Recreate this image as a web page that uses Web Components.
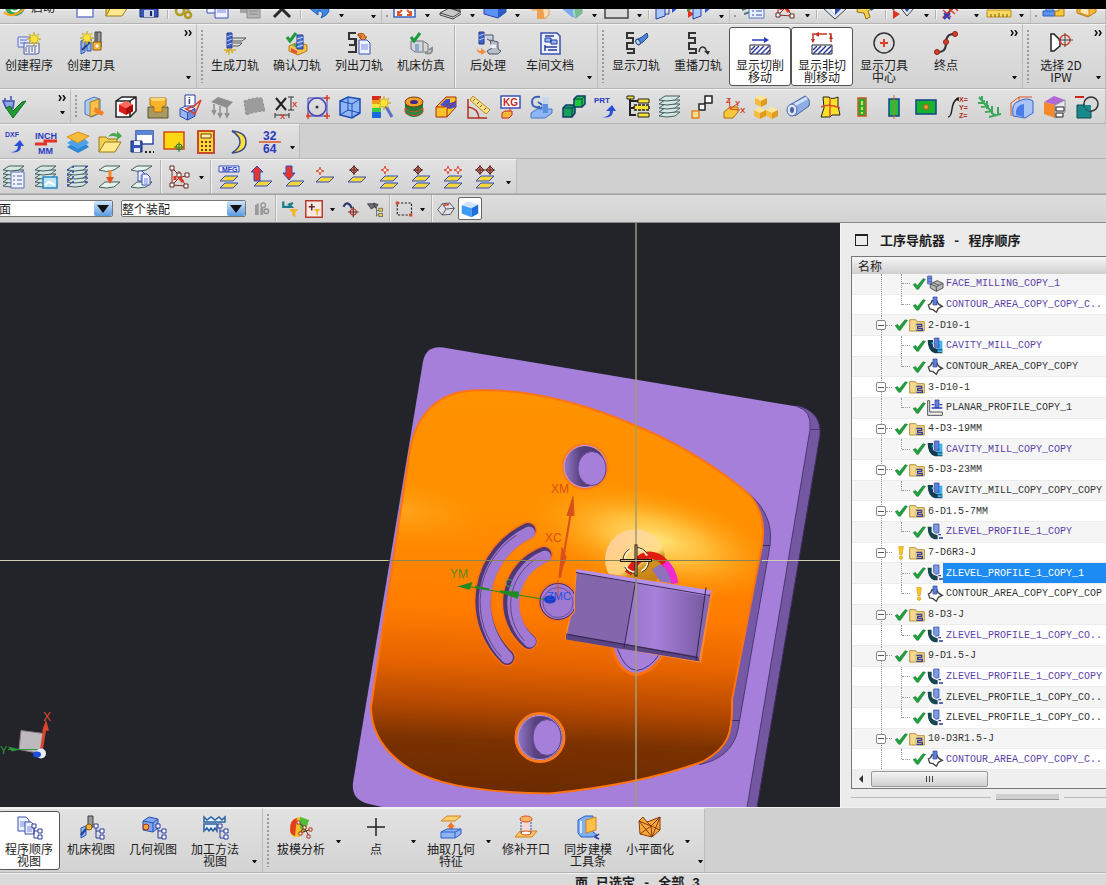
<!DOCTYPE html>
<html lang="zh-CN">
<head>
<meta charset="utf-8">
<meta name="viewport" content="width=device-width, initial-scale=1">
<title>工序导航器</title>
<style>
    :root {
        --bar-top: #e2e2e2;
        --bar-bottom: #d3d3d3;
        --edge-dark: #b4b4b4;
        --edge-light: #f4f4f4;
        --ink: #1c1c1c;
    }
    body {
        margin: 0;
        color: var(--ink);
        font-family: "Noto Sans CJK SC", sans-serif;
        font-size: 12px;
        background: #d4d4d4;
    }
</style>
</head>
<body>
<cam-window>
    <tool-row slot="bars" kind="clipped">
        <tool-group size="382">
            <start-menu>启动</start-menu>
            <tool-icon name="new"></tool-icon>
            <tool-icon name="open"></tool-icon>
            <tool-icon name="save"></tool-icon>
            <tool-sep></tool-sep>
            <tool-icon name="cut"></tool-icon>
            <tool-icon name="copy"></tool-icon>
            <tool-icon name="paste"></tool-icon>
            <tool-icon name="delete"></tool-icon>
            <tool-sep></tool-sep>
            <tool-icon name="undo"></tool-icon>
            <tool-caret></tool-caret>
            <tool-overflow></tool-overflow>
        </tool-group>
        <tool-group size="348" grip>
            <tool-icon name="fit"></tool-icon>
            <tool-caret></tool-caret>
            <tool-icon name="laptop"></tool-icon>
            <tool-caret></tool-caret>
            <tool-icon name="bluecube"></tool-icon>
            <tool-caret></tool-caret>
            <tool-icon name="sectionA"></tool-icon>
            <tool-icon name="sectionB"></tool-icon>
            <tool-caret></tool-caret>
            <tool-icon name="square"></tool-icon>
            <tool-caret></tool-caret>
            <tool-sep></tool-sep>
            <tool-icon name="door"></tool-icon>
            <tool-icon name="doorflag"></tool-icon>
            <tool-overflow></tool-overflow>
        </tool-group>
        <tool-group size="301" grip>
            <tool-icon name="listview"></tool-icon>
            <tool-icon name="graph"></tool-icon>
            <tool-caret></tool-caret>
            <tool-sep></tool-sep>
            <tool-icon name="diamond"></tool-icon>
            <tool-icon name="wrench"></tool-icon>
            <tool-sep></tool-sep>
            <tool-icon name="flags"></tool-icon>
            <tool-caret></tool-caret>
            <tool-sep></tool-sep>
            <tool-icon name="comb"></tool-icon>
            <tool-caret></tool-caret>
            <tool-icon name="ruler"></tool-icon>
            <tool-caret></tool-caret>
        </tool-group>
        <tool-group grip>
            <tool-icon name="clamp"></tool-icon>
            <tool-icon name="goldcube"></tool-icon>
        </tool-group>
    </tool-row>

    <tool-row slot="bars" kind="large">
        <tool-group size="197" shifted>
            <tool-button icon="program">创建程序</tool-button>
            <tool-button icon="tool">创建刀具</tool-button>
            <tool-overflow more></tool-overflow>
        </tool-group>
        <tool-group size="401" grip>
            <tool-button icon="generate">生成刀轨</tool-button>
            <tool-button icon="verify">确认刀轨</tool-button>
            <tool-button icon="listpath">列出刀轨</tool-button>
            <tool-button icon="simulate">机床仿真</tool-button>
            <tool-sep></tool-sep>
            <tool-button icon="post">后处理</tool-button>
            <tool-button icon="shopdoc">车间文档</tool-button>
            <tool-overflow></tool-overflow>
        </tool-group>
        <tool-group size="425" grip>
            <tool-button icon="showpath">显示刀轨</tool-button>
            <tool-button icon="replay">重播刀轨</tool-button>
            <tool-button icon="cutmove" pressed>显示切削移动</tool-button>
            <tool-button icon="noncut" pressed>显示非切削移动</tool-button>
            <tool-button icon="toolcenter">显示刀具中心</tool-button>
            <tool-button icon="endpoint">终点</tool-button>
            <tool-overflow more></tool-overflow>
        </tool-group>
        <tool-group grip>
            <tool-button icon="ipw">选择 2D IPW</tool-button>
            <tool-overflow more></tool-overflow>
        </tool-group>
    </tool-row>

    <tool-row slot="bars">
        <tool-group size="71" shifted>
            <tool-icon name="plugcheck"></tool-icon>
            <tool-overflow more></tool-overflow>
        </tool-group>
        <tool-group grip>
            <tool-icon name="extractbody"></tool-icon>
            <tool-icon name="redbox"></tool-icon>
            <tool-icon name="pocket"></tool-icon>
            <tool-icon name="infobox"></tool-icon>
            <tool-icon name="greyplate"></tool-icon>
            <tool-icon name="greysheet"></tool-icon>
            <tool-icon name="dimx"></tool-icon>
            <tool-icon name="circlebox"></tool-icon>
            <tool-icon name="glasscube"></tool-icon>
            <tool-icon name="rainbow"></tool-icon>
            <tool-icon name="ring"></tool-icon>
            <tool-icon name="step"></tool-icon>
            <tool-icon name="protractor"></tool-icon>
            <tool-icon name="kg"></tool-icon>
            <tool-icon name="revolve"></tool-icon>
            <tool-icon name="twocubes"></tool-icon>
            <tool-icon name="prt"></tool-icon>
            <tool-icon name="hierarchy"></tool-icon>
            <tool-icon name="stack"></tool-icon>
            <tool-icon name="links"></tool-icon>
            <tool-icon name="zyx"></tool-icon>
            <tool-icon name="goldcubes"></tool-icon>
            <tool-icon name="tube"></tool-icon>
            <tool-icon name="yellowsurf"></tool-icon>
            <tool-icon name="greenslot"></tool-icon>
            <tool-icon name="greentall"></tool-icon>
            <tool-icon name="greenwide"></tool-icon>
            <tool-icon name="xyz"></tool-icon>
            <tool-icon name="greencomb"></tool-icon>
            <tool-icon name="bluewrap"></tool-icon>
            <tool-icon name="colorbox"></tool-icon>
            <tool-icon name="tealshape"></tool-icon>
        </tool-group>
    </tool-row>

    <tool-row slot="bars">
        <tool-group size="300" shifted>
            <tool-icon name="dxf"></tool-icon>
            <tool-icon name="inch"></tool-icon>
            <tool-icon name="layers"></tool-icon>
            <tool-icon name="openarrow"></tool-icon>
            <tool-icon name="savewin"></tool-icon>
            <tool-icon name="yellowrect"></tool-icon>
            <tool-icon name="calc"></tool-icon>
            <tool-icon name="moon"></tool-icon>
            <tool-icon name="frac"></tool-icon>
            <tool-overflow></tool-overflow>
        </tool-group>
    </tool-row>

    <tool-row slot="bars">
        <tool-group size="517" shifted>
            <tool-icon name="stacklist"></tool-icon>
            <tool-icon name="stackpic"></tool-icon>
            <tool-icon name="stackdots"></tool-icon>
            <tool-icon name="stackmove"></tool-icon>
            <tool-icon name="stackcopy"></tool-icon>
            <tool-sep></tool-sep>
            <tool-icon name="graph"></tool-icon>
            <tool-caret></tool-caret>
            <tool-sep></tool-sep>
            <tool-icon name="mfg"></tool-icon>
            <tool-icon name="planeup"></tool-icon>
            <tool-icon name="planedown"></tool-icon>
            <tool-icon name="planestar"></tool-icon>
            <tool-icon name="planemark"></tool-icon>
            <tool-icon name="planesstar"></tool-icon>
            <tool-icon name="planesmark"></tool-icon>
            <tool-icon name="planesstars"></tool-icon>
            <tool-icon name="planesmarks"></tool-icon>
            <tool-overflow></tool-overflow>
        </tool-group>
    </tool-row>

    <selection-bar slot="bars"></selection-bar>

    <part-viewport slot="canvas"></part-viewport>
    <operation-navigator slot="side" heading="工序导航器 - 程序顺序" column="名称"></operation-navigator>

    <tool-row slot="footer" kind="large">
        <tool-group size="263" shifted>
            <tool-button icon="vprogram" pressed>程序顺序视图</tool-button>
            <tool-button icon="vmachine">机床视图</tool-button>
            <tool-button icon="vgeometry">几何视图</tool-button>
            <tool-button icon="vmethod">加工方法视图</tool-button>
            <tool-overflow></tool-overflow>
        </tool-group>
        <tool-group size="442" grip>
            <tool-button icon="draft">拔模分析</tool-button>
            <tool-caret></tool-caret>
            <tool-button icon="point">点</tool-button>
            <tool-caret></tool-caret>
            <tool-button icon="extract">抽取几何特征</tool-button>
            <tool-caret></tool-caret>
            <tool-button icon="patch">修补开口</tool-button>
            <tool-button icon="sync">同步建模工具条</tool-button>
            <tool-button icon="facet">小平面化</tool-button>
            <tool-caret></tool-caret>
            <tool-overflow></tool-overflow>
        </tool-group>
    </tool-row>
    <status-line slot="footer">面 已选定 - 全部 3</status-line>
</cam-window>

<script>
// ---------- icon pieces ----------
const plane = (x, y, fill = '#f2d63c', stroke = '#2f4fc0') =>
    `<path d="M${x} ${y + 5}l5-5h13l-5 5z" fill="${fill}" stroke="${stroke}"/>`;

const cube = (x, y, s, top, left, right, line = 'none') => {
    const h = s / 2, q = s / 4;
    return `<g stroke="${line}" stroke-linejoin="round">
        <path d="M${x} ${y + q}l${h}-${q} ${h} ${q}-${h} ${q}z" fill="${top}"/>
        <path d="M${x} ${y + q}l${h} ${q}v${h}l-${h}-${q}z" fill="${left}"/>
        <path d="M${x + s} ${y + q}l-${h} ${q}v${h}l${h}-${q}z" fill="${right}"/></g>`;
};

const sheets = (n = 5) => {
    let out = '';
    for (let i = n - 1; i >= 0; i--) {
        const y = 4 + i * 4;
        out += `<path d="M1 ${y + 1}l6-4h15l-5 4q-8 2-16 0z" fill="#d7e6e4" stroke="#41605f"/>`;
    }
    return out;
};

const label = (x, y, size, color, text, extra = '') =>
    `<text x="${x}" y="${y}" font-family="Liberation Sans, sans-serif" font-weight="700" font-size="${size}" fill="${color}" ${extra}>${text}</text>`;

const star = (x, y) => `<path d="M${x} ${y - 4}l1 3 3 1-3 1-1 3-1-3-3-1 3-1z" fill="#fff0e8" stroke="#e0503c"/>`;
const mark = (x, y) => `<path d="M${x} ${y - 4}l4 4-4 4-4-4z" fill="#c9776a" stroke="#5c2a22"/><path d="M${x} ${y - 5}v10M${x - 5} ${y}h10" stroke="#5c2a22"/>`;
const tree = (x, y) => `<g fill="#fff" stroke="#2b3a9c"><path d="M${x + 2} ${y + 3}v11h4M${x + 2} ${y + 7}h4" fill="none"/><path d="M${x} ${y}h4v4h-4zM${x + 6} ${y + 5}h4v4h-4zM${x + 6} ${y + 11}h4v4h-4z"/></g>`;
const tick = (x, y) => `<path d="M${x} ${y + 4}l3 4 6-8" fill="none" stroke="#1d9a3c" stroke-width="3"/>`;
const sun = (x, y) => `<path d="M${x} ${y - 6}l1 4 4-2-2 4 4 1-4 1 2 4-4-2-1 4-1-4-4 2 2-4-4-1 4-1-2-4 4 2z" fill="#ffe23a" stroke="#b99a1c" stroke-width=".6"/>`;
const page = (x, y, w = 10, h = 13) => `<path d="M${x} ${y}h${w - 3}l3 3v${h - 3}h-${w}z" fill="#eef2ff" stroke="#3a50b4"/><path d="M${x + 2} ${y + 5}h${w - 4}M${x + 2} ${y + 7}h${w - 4}M${x + 2} ${y + 9}h${w - 4}" stroke="#7a8cd8"/>`;
const hatch = `<path d="M2 14h20v9H2z" fill="#fff" stroke="#222"/><path d="M3 19l4-4M3 23l8-8M8 23l8-8M13 23l8-8M18 23l4-4" stroke="#2b3a9c" stroke-width="1.5"/>`;
const snake = `<path d="M3 2h7M3 1v6h6v5H3v6h7v4H3" fill="none" stroke="#333" stroke-width="2"/>`;
const redArrow = (d) => `<path d="${d}" fill="#e8342a" stroke="#2f4fc0"/>`;

const ICONS = {
    globe: '<circle cx="12" cy="11" r="10" fill="#1c7fc4"/><path d="M4 8q6-5 9 2t8 4q-2 6-9 7Q4 20 2 12z" fill="#2fa84a"/><path d="M8 15q5 4 9-2" stroke="#fff" stroke-width="2" fill="none"/><path d="M1 17q8 8 21-4" stroke="#f4a422" stroke-width="2" fill="none"/>',
    new: '<path d="M4 0h16v22H4z" fill="#fff" stroke="#6f7fc8" stroke-width="1.500"/>',
    open: '<path d="M1 21V6h7l2 3h9v3" fill="#f3cf52" stroke="#9a7a14"/><path d="M1 21l5-9h17l-6 9z" fill="#ffe98c" stroke="#9a7a14"/>',
    save: '<path d="M3 2h18v20H3z" fill="#3555b8" stroke="#16266e"/><path d="M7 2h10v8H7z" fill="#e8eefc"/><path d="M7 15h10v7H7z" fill="#c7cfdf"/><path d="M13 16h2v5h-2z" fill="#16266e"/>',
    cut: '<path d="M7 2l8 14M19 5L9 15" stroke="#8b8b8b" stroke-width="2"/><g fill="none" stroke="#b09a22" stroke-width="2.500"><circle cx="6" cy="16" r="4"/><circle cx="14" cy="20" r="3"/></g><path d="M9 15l13-4" stroke="#b09a22" stroke-width="2"/>',
    copy: page(1, 3, 12, 15) + page(9, 8, 13, 15),
    paste: '<path d="M2 3h14v15H2z" fill="#a4a4a4"/><path d="M9 8h13v15H9z" fill="#b5b5b5" stroke="#8b8b8b"/><path d="M11 13h9M11 16h9M11 19h9" stroke="#8b8b8b"/>',
    delete: '<path d="M4 6l16 16M20 6L4 22" stroke="#2a2a2a" stroke-width="3"/>',
    undo: '<path d="M2 13l9-7v4q11-1 11 6-1 4-8 7 4-7-3-7v4z" fill="#3f86e0" stroke="#2060b4"/>',
    fit: '<path d="M1 3h21v19H1z" fill="#fff" stroke="#3a62c0" stroke-width="1.500"/><path d="M5 8l4 3M18 8l-4 3M5 19l4-4M18 19l-4-4M5 11V8h4M18 11V8h-4M5 16v4h4M18 16v4h-4" stroke="#e0542a" stroke-width="2" fill="none"/>',
    laptop: '<path d="M10 1l12 5v10l-12-4z" fill="#9b9b9b" stroke="#444"/><path d="M2 18l9-5 12 4-8 5z" fill="#c7c7c7" stroke="#444"/><path d="M2 18v2l13 4 8-5" fill="none" stroke="#444"/>',
    bluecube: '<path d="M1 5l6-5h16v17l-8 6-14-4z" fill="#5c92f2" stroke="#2448a8"/><path d="M15 9l8-6v14l-8 6z" fill="#2d5cc8"/><path d="M1 5l14 4 8-6" fill="none" stroke="#a8c8ff"/>',
    sectionA: '<path d="M4 16V4h14v12z" fill="#f6b968"/><path d="M2 12l14-3v10l2 5H9V14z" fill="#f0a04c"/><path d="M14 9l7-3v14l-5 4z" fill="#f7dcb8" stroke="#e0a060"/><path d="M1 14h8" stroke="#bbb"/>',
    sectionB: '<path d="M1 12l8-7 13 3v10l-6 5z" fill="#a7d4c8" stroke="#6a9ac8"/><path d="M1 13h12v10z" fill="#7aaaf0"/><path d="M14 12l8-4v10l-6 5z" fill="#7bbc8c"/>',
    square: '<path d="M0 1h23v22H0z" fill="#d9d9d9" stroke="#444" stroke-width="1.500"/>',
    door: '<path d="M1 4l9-3v20l-9 3z" fill="#a9c8ff" stroke="#2b3a9c"/><path d="M10 3h4v16h-4" fill="none" stroke="#2b3a9c"/><path d="M8 12h9V8l6 5-6 5v-4H8z" fill="#2b50d8"/>',
    doorflag: '<path d="M0 9l7 4-7 4z" fill="#2a9a3c"/><path d="M1 15l6 4-6 4z" fill="#e23222"/><path d="M6 4l8-3v20l-8 3z" fill="#a9c8ff" stroke="#2b3a9c"/><path d="M12 12h6V8l6 5-6 5v-4h-6z" fill="#2b50d8"/>',
    listview: '<path d="M2 5l8-3M1 10l9-3M1 15l8-3M3 19l6-2" stroke="#527a78" stroke-width="2"/><path d="M8 3h15v20H8z" fill="#e9f0ff" stroke="#5a76c8"/><path d="M11 8h2m2 0h6M11 12h2m2 0h6M11 16h2m2 0h6M11 20h2m2 0h6" stroke="#3a50b4"/>',
    graph: '<path d="M5 3v17M5 3l7 7M5 20l7-7 9-3M12 10l7 11M5 20l14 1M12 6v8" stroke="#8a2a20" fill="none"/><g fill="#fff" stroke="#5c2a22"><path d="M3 1h4v4H3zM3 18h4v4H3zM10 8h4v4h-4zM18 8h4v4h-4zM17 19h4v4h-4z"/></g><path d="M12 12l4 5M8 11v4" stroke="#e23222" stroke-width="3"/>',
    diamond: '<path d="M12 3l11 11-11 10L1 14z" fill="#dfe5f4" stroke="#444"/><path d="M12 7l6 7-6 6-5-6z" fill="#2b4fae"/><path d="M12 7v13l-5-6z" fill="#fff"/>',
    wrench: '<path d="M3 8l6 5 9-7 4 4-9 6 2 6-4 2-2-6-7-1z" fill="#f6d04a" stroke="#8d6d10"/><path d="M14 9l8-3v6l-6 4z" fill="#2b4fae"/>',
    flags: '<path d="M1 6l6 5-6 4z" fill="#2a9a3c" stroke="#176426"/><path d="M1 15l7 4-7 5z" fill="#e23222"/><path d="M15 3l8 9-8 9-7-9z" fill="#dfe5f4" stroke="#444"/><path d="M15 7l4 5-4 5-4-5z" fill="#2b4fae"/>',
    comb: '<path d="M1 23L22 2" stroke="#b03020" stroke-width="2"/><path d="M4 11l9 8M8 8l8 8M12 4l8 8M1 15l8 7" stroke="#d4432f" stroke-width="1.500"/><path d="M2 18l6 6M8 18l-6 6" stroke="#2b3ac0" stroke-width="2"/>',
    ruler: '<path d="M1 2v12M23 2v12" stroke="#2b50b8" stroke-width="1.500"/><path d="M3 9h18" stroke="#2b50b8" stroke-width="2"/><path d="M2 9l5-3v6zM22 9l-5-3v6z" fill="#2b50b8"/><path d="M0 15h24v7H0z" fill="#f8d860" stroke="#b98a1c"/><path d="M4 19v3M8 19v3M12 18v4M16 19v3M20 19v3" stroke="#7d5c0c"/>',
    clamp: '<path d="M4 2h7v16H4z" fill="#7fb2f4" stroke="#2d5cc8"/><path d="M1 16h12v5H1z" fill="#5c92e8" stroke="#2d5cc8"/><path d="M14 2h8v19h-9v-5h4V8h-3z" fill="#f8c83a" stroke="#a87c10"/>',
    goldcube: '<path d="M3 8l8-6 11 3v12l-8 5-11-4z" fill="#f8b83a" stroke="#b77a10"/><path d="M6 10l9 2v9l-9-3z" fill="#fde7b0" stroke="#c98a20"/>',

    program: '<path d="M1 6h12v10H1z" fill="#dfe6fa" stroke="#5a6fc4"/><path d="M3 9h7M3 12h6" stroke="#5a6fc4"/><path d="M7 12h15v10l-2 1H7z" fill="#eef1fb" stroke="#4a58a8"/><path d="M9 21v-5M12 22v-6M15 21v-5M18 22v-6M9 15h11" stroke="#5a5f8a"/>' + sun(17, 7),
    tool: '<path d="M2 10l4-2v13l-4 2zM8 8h4v12H8z" fill="#8fb8ec" stroke="#2b4fae"/><path d="M3 19l8-8" stroke="#1b3f8e" stroke-width="2"/><path d="M16 1h6v15h-6z" fill="#9a9a9a" stroke="#3c3c3c"/><path d="M18 1v10" stroke="#3c3c3c"/><path d="M14 11h8v8h-8z" fill="#f4b53c" stroke="#8b5a0c"/><circle cx="18" cy="15" r="1.500" fill="#fff"/>' + sun(8, 6),
    generate: '<path d="M4 2h5v15H4z" fill="#3b62c8" stroke="#24388a"/><path d="M4 6l5-2M4 10l5-2M4 14l5-2" stroke="#b7ccff"/><path d="M9 7h14l-4 3H9M10 12h9l-3 3h-6" fill="none" stroke="#555"/><path d="M1 19h12M3 22l3-4M10 22l-3-4M6 24v-6" stroke="#d8b32a" stroke-width="1.500"/>',
    verify: '<path d="M4 15l9-4 9 3v6l-9 4-9-4z" fill="#f7c04a" stroke="#b77a10"/><path d="M7 14l6-2 5 2-5 4z" fill="#3aa86a"/><path d="M6 17l6 3v3l-6-2z" fill="#e2533a"/><path d="M12 4h6v14h-6z" fill="#4a74d8" stroke="#24388a"/><path d="M12 8l6-2M12 12l6-2M12 16l6-2" stroke="#cfdcff"/>' + tick(2, 2),
    listpath: '<path d="M9 2H2v6h6v6H2M8 8h1v6M9 14v7H1" fill="none" stroke="#333" stroke-width="2"/><path d="M11 3q7-2 7 3h2l-4 4-4-4h3q0-2-4-1z" fill="#f28a2a" stroke="#a84a10"/>' + page(12, 9, 11, 14),
    simulate: '<path d="M2 10h12l5 3v8H6l-4-3z" fill="#d4d7da" stroke="#6d7276"/><path d="M6 13h4v8H6z" fill="#8fa9c8"/><path d="M14 11v9" stroke="#6d7276"/><path d="M16 22q8 2 7-5l-3 2" fill="none" stroke="#8b8b8b" stroke-width="2"/>' + tick(2, 2),
    post: '<path d="M3 1h5v12H3z" fill="#3b62c8" stroke="#24388a"/><path d="M3 5l5-2M3 9l5-2" stroke="#b7ccff"/><path d="M9 4h8v7l-6-3" fill="#c9d2e4" stroke="#4b5468"/><path d="M14 9l8 2v7l3 2-3 3H13l-2-3 5-3z" fill="#b8bec8" stroke="#4b5468"/><path d="M15 13l5 1v3h-5z" fill="#eef"/><path d="M1 16q0 4 4 4v-3l5 4-5 3v-2q-5 0-4-6z" fill="#f08a3a"/>',
    shopdoc: '<path d="M3 2h16l3 3v18H3z" fill="#eef2ff" stroke="#3a50b4" stroke-width="1.500"/><path d="M7 7h6v4H7zM13 9h6v4h-6z" fill="#8fb8ec" stroke="#2b3a9c"/><path d="M7 5h9M7 14v6M7 16h12M10 19h9" stroke="#2b3a9c" stroke-width="1.500"/>',
    showpath: snake + '<path d="M12 9l6-3 5-4 1 4-5 5-5 3z" fill="#4a86d8" stroke="#24488a"/><ellipse cx="14" cy="11" rx="2" ry="3" fill="#bcd8f8" stroke="#24488a" transform="rotate(-30 14 11)"/>',
    replay: snake + '<path d="M13 21q1-7 6-4l2 4" fill="none" stroke="#333" stroke-width="1.500"/><path d="M18 20h6l-2 4z" fill="#333"/>',
    cutmove: hatch + '<path d="M4 9h15" stroke="#2b3ac0" stroke-width="1.500"/><path d="M16 6l5 3-5 3z" fill="#2b3ac0"/>',
    noncut: hatch + '<path d="M3 11V3h18v8" stroke="#c83222" stroke-width="1.500" fill="none" stroke-dasharray="10 2"/><path d="M1 8h4l-2 4zM19 8h4l-2-4zM9 1v5L4 3z" fill="#c83222"/>',
    toolcenter: '<circle cx="12" cy="12" r="10" fill="none" stroke="#333" stroke-width="1.500"/><path d="M12 8v8M8 12h8" stroke="#d8402a" stroke-width="2"/>',
    endpoint: '<path d="M3 21q9 1 9-9t9-9" fill="none" stroke="#333" stroke-width="2"/><g fill="#d8402a" stroke="#8a1c10"><circle cx="3" cy="21" r="2.500"/><circle cx="12" cy="11" r="2.500"/><circle cx="21" cy="3" r="2.500"/></g>',
    ipw: '<path d="M2 3h3l6 6v6l-6 5H2z" fill="#fff" stroke="#222" stroke-width="1.500"/><circle cx="16" cy="9" r="5" fill="none" stroke="#d8402a" stroke-width="1.500"/><path d="M16 2v14M9 9h15" stroke="#444"/>',

    plugcheck: '<path d="M3 3v3M9 1v4M1 6h11l-1 7H4z" stroke="#3a4fa8" fill="#8fa4ea" stroke-width="1.500"/><path d="M4 13l7 10L24 6l-4 1-9 9-3-5z" fill="#1f9c36" stroke="#136a22"/>',
    extractbody: '<path d="M3 6l9-4 6 2v14l-8 4-7-3z" fill="#aacdf5" stroke="#4a78c4"/><path d="M8 7l9-3v14l-9 4z" fill="#fbc14b" stroke="#b77a10"/><path d="M13 12l9 5-2 4-8-4z" fill="#f58220"/>',
    redbox: '<path d="M2 6l6-4h14v14l-6 6H2zM2 6h14v16M16 6l6-4" fill="#fff" stroke="#222" stroke-width="1.500"/>' + cube(5, 6, 14, '#ff6a5a', '#e01c14', '#a80c0c'),
    pocket: '<path d="M2 12h20v11H2z" fill="#a99a62" stroke="#5e5430"/><path d="M4 3h16v7l-4 2v5H8v-5l-4-2z" fill="#fbb42a" stroke="#b06c0c"/><path d="M4 3h16l-2 3H6z" fill="#ffd670"/>',
    infobox: cube(2, 10, 15, '#d4e2ff', '#9ab8f4', '#6c90dc', '#3a50b4') + '<path d="M7 0h10v11H7z" fill="#fff" stroke="#2b3a9c"/>' + label(10, 9, 9, '#16266e', 'i') + '<path d="M16 11l7-6-6 14-9-5z" fill="none" stroke="#d8402a" stroke-width="1.500"/>',
    greyplate: '<path d="M1 7l7-5 15 5-6 6z" fill="#8e8e8e"/><path d="M4 9v8M10 11v9M17 12v8M2 15l2 4 2-4M8 18l2 4 2-4M15 18l2 4 2-4" stroke="#8e8e8e" stroke-width="1.500" fill="none"/>',
    greysheet: '<path d="M2 6q10-4 18-3l3 13q-8 0-19 4z" fill="#9c9c9c" stroke="#888" stroke-dasharray="2 2"/>',
    dimx: '<path d="M2 3l10 12M12 3L2 15" stroke="#222" stroke-width="2"/><path d="M17 2v13M14 2h6M14 15h6M1 18v5M15 18v5M1 20h14" stroke="#333"/>' + label(18, 12, 8, '#d8402a', 'X') + label(6, 24, 8, '#d8402a', 'X'),
    circlebox: '<path d="M2 3h19v18H2z" fill="none" stroke="#4646b8"/><circle cx="11" cy="12" r="9" fill="none" stroke="#4646b8" stroke-width="1.500"/><circle cx="11" cy="12" r="1.500" fill="#333"/><path d="M21 0v6M18 3h6M2 18v6M0 21h5M21 18v6M18 21h6" stroke="#d8402a" stroke-width="1.500"/>',
    glasscube: '<path d="M2 6l8-4 12 2v14l-8 5-12-3z" fill="#8eb6f4" stroke="#1d4bb4" stroke-width="1.500"/><path d="M2 6l12 3 8-5M14 9v14M10 2v13l-8 5M10 15l12 3" fill="none" stroke="#1d4bb4"/>',
    rainbow: '<path d="M2 1h9v5H2z" fill="#d82a1c"/><path d="M2 5h9v4H2z" fill="#f59a1c"/><path d="M2 9h9v4H2z" fill="#f4e63a"/><path d="M2 13h9v4H2z" fill="#3cc84a"/><path d="M2 17h9v6H2z" fill="#1c6ae0"/><path d="M14 8l8 14" stroke="#5a6fc4" stroke-width="3"/>' + sun(14, 7),
    ring: '<path d="M3 8v10q9 8 18 0V8z" fill="#1f7a3a"/><path d="M3 13q9 8 18 0v4q-9 7-18 0z" fill="#1f8a4a" stroke="#e04a1c"/><ellipse cx="12" cy="7" rx="9" ry="5" fill="#f2a02a" stroke="#7a3a0c"/><ellipse cx="12" cy="7" rx="4" ry="2" fill="#3a2a8a"/>',
    step: '<path d="M2 12l10-10h10v10l-9 10H2z" fill="#f8c42a" stroke="#a82a10"/><path d="M6 10l6-6h4v4l6-2v6l-6 2z" fill="#4a50c8"/><path d="M2 12h9l4-4M13 22v-8l9-8" fill="none" stroke="#a82a10"/>',
    protractor: '<path d="M2 4v19h19" fill="none" stroke="#b03020" stroke-width="1.500"/><path d="M2 12q10 1 11 11" fill="none" stroke="#b03020" stroke-width="1.500"/><path d="M7 1l17 14-4 4L4 5z" fill="#f8e08a" stroke="#b98a1c"/><path d="M9 4l-2 2M13 7l-2 2M16 10l-2 2M20 13l-2 2" stroke="#7d5c0c"/>',
    kg: '<path d="M3 1h19v12H3z" fill="#fff" stroke="#3a50b4" stroke-width="1.500"/>' + label(5, 11, 10, '#c8281c', 'KG') + '<path d="M12 13v3" stroke="#c8281c"/><path d="M4 18l3-2h7v4l-3 3H4z" fill="#f8b83a" stroke="#c8281c"/>',
    revolve: '<path d="M10 2Q2 1 2 7t7 5l-1 3 6-4-6-4" fill="none" stroke="#3a62b8" stroke-width="2"/><path d="M12 2h7v11h-7z" fill="#bcd4f4" opacity=".6"/><path d="M1 18l6-4h15v4l-7 5H1z" fill="#8eb6f4" stroke="#4a78c4"/><path d="M13 9h5v9h-5z" fill="#5a92e0"/>',
    twocubes: '<path d="M1 13l3-3h9v8l-3 4H1z" fill="#18a058" stroke="#123a6a" stroke-width="1.500"/><path d="M1 13h9l3-3M10 13v9" stroke="#123a6a" fill="none"/><path d="M12 4l3-3h8v8l-3 3h-8z" fill="#1cc838" stroke="#123a6a" stroke-width="1.500"/><path d="M12 4h8l3-3M20 4v8" stroke="#123a6a" fill="none"/>',
    prt: label(0, 8, 8, '#2b3ac0', 'PRT') + '<path d="M8 22q8 0 8-6h-4l6-6 4 6h-3q0 8-11 6z" fill="#2b50d8"/>',
    hierarchy: '<path d="M4 2v18h6M4 6h8M4 13h8" fill="none" stroke="#222" stroke-width="2"/><path d="M1 1h7v3H1zM12 4h11v4H12zM12 18h11v4H12z" fill="#f6e23a" stroke="#222"/><path d="M8 10h15v5H8z" fill="#f6e23a" stroke="#222" stroke-width="1.500" stroke-dasharray="3 1"/>',
    stack: sheets(),
    links: '<path d="M16 6l-4 6M11 13l-5 6" stroke="#333"/><path d="M15 1h7v7h-7z" fill="#fff" stroke="#222" stroke-width="1.500"/><path d="M9 9h6v6H9z" fill="#fff" stroke="#222" stroke-width="1.500"/><path d="M2 16h7v7H2z" fill="#fbdc8a" stroke="#e0802a" stroke-width="1.500"/>',
    zyx: label(4, 8, 8, '#d8402a', 'Z') + label(13, 11, 8, '#d8402a', 'Y') + label(18, 18, 8, '#d8402a', 'X') + '<path d="M2 17l6-5h8v5l-5 6H2z" fill="#f8c83a" stroke="#b06c0c"/><path d="M8 14L7 3M8 14l10 1M8 14l7-5" stroke="#d8402a"/>',
    goldcubes: cube(1, 0, 12, '#fde59a', '#f6bd3c', '#e09a1c') + cube(0, 12, 12, '#fde59a', '#f6bd3c', '#e09a1c') + cube(12, 12, 12, '#fde59a', '#f6bd3c', '#e09a1c'),
    tube: '<path d="M4 10l15-9q6 3 4 10L9 21z" fill="#8eaee4" stroke="#4462a8"/><path d="M8 10l13-7" stroke="#d4e2fa" stroke-width="3"/><ellipse cx="6" cy="15" rx="5" ry="6" fill="#dce6f8" stroke="#4462a8"/><ellipse cx="6" cy="15" rx="2" ry="3" fill="#4462a8"/>',
    yellowsurf: '<path d="M5 2h6q2 3 9 0v9l2 9h-8l-2 2H3l3-9z" fill="#fbe02a" stroke="#222"/><path d="M3 12q8-4 19 1M12 3v18" fill="none" stroke="#d8502a" stroke-width="1.500"/>',
    greenslot: '<path d="M8 3h8v18H8z" fill="#1fae3a" stroke="#c85a1c" stroke-width="1.500"/><path d="M12 6v4M12 12v3M12 17v2" stroke="#f6d83a" stroke-width="2"/>',
    greentall: '<path d="M7 4h10v17H7z" fill="#1fc03a" stroke="#16408a" stroke-width="1.500"/><path d="M12 0v24" stroke="#d86a2a"/>',
    greenwide: '<path d="M2 5h20v14H2z" fill="#16b42c" stroke="#16408a" stroke-width="1.500"/><circle cx="12" cy="12" r="2.500" fill="#d8a42a" stroke="#c84a1c"/>',
    xyz: '<path d="M2 22q3 0 4-8t6-11" fill="none" stroke="#222" stroke-width="1.500"/><path d="M9 5l4-3v4z" fill="#222"/>' + label(13, 7, 7, '#b03020', 'X=') + label(13, 15, 7, '#b03020', 'Y=') + label(13, 23, 7, '#b03020', 'Z='),
    greencomb: '<path d="M1 2l15 18M0 8l7-2M3 12l8-1M7 17l8-1M11 22l8-2M4 9V1M9 14V6M14 19v-8M20 21v-9M16 20l7-1" stroke="#3aa85a" stroke-width="2" fill="none"/>',
    bluewrap: '<path d="M3 20q-2-12 6-14 8-4 14 0v12l-8 5-12-2z" fill="#a9c4f6" stroke="#3a62c8"/><path d="M6 20Q5 10 14 9v13z" fill="#4a7ce8"/><path d="M1 8l8-6h13M1 8v13M9 6v-4" stroke="#d8502a" fill="none"/>',
    colorbox: '<path d="M2 7l10-6 11 4-10 5z" fill="#b06ad8"/><path d="M2 7l11 3v13L2 19z" fill="#f58a2a"/><path d="M13 10l10-5v12l-10 6z" fill="#e8e8f2" stroke="#888"/><path d="M14 12h8v4h-8zM14 18h7v4h-7z" fill="#fff" stroke="#222"/>',
    tealshape: '<path d="M1 2h9" stroke="#c8281c" stroke-width="2"/><path d="M3 10h14v13H3z" fill="#188a8c" stroke="#0c4a4c"/><circle cx="17" cy="9" r="7" fill="#d9d9d9" stroke="#333" stroke-width="1.500"/><path d="M10 10h7v6q-6 0-7-6z" fill="#188a8c"/>',

    dxf: label(3, 7, 7, '#2b3ac0', 'DXF') + '<path d="M8 22q8 0 8-6h-4l6-6 4 6h-3q0 8-11 6z" fill="#2b50d8"/>',
    inch: label(1, 9, 9, '#2b3ac0', 'INCH') + '<path d="M1 14h10v-3h12M1 14h12" stroke="#e2352a" stroke-width="3" fill="none"/>' + label(4, 24, 9, '#2b3ac0', 'MM'),
    layers: '<path d="M1 17l6-4h12l4 4-11 6z" fill="#2f86d4"/><path d="M1 13l6-4h12l4 4-11 6z" fill="#4ba2ea"/><path d="M1 7l11-5 11 4-11 7z" fill="#f8bb3c" stroke="#d8901c"/>',
    openarrow: '<path d="M1 22V7h7l2 2h9v4" fill="#f3cf52" stroke="#9a7a14"/><path d="M1 22l6-10h16l-6 10z" fill="#ffe98c" stroke="#9a7a14"/><path d="M10 7q4-6 9-3V1l5 5-5 4V7q-5-2-9 0z" fill="#4aa84a"/>',
    savewin: '<path d="M6 1h17v13H6z" fill="#fff" stroke="#2b50a8" stroke-width="1.500"/><path d="M6 1h17v4H6z" fill="#5a86d8"/><path d="M1 11h11v11H1z" fill="#3555b8" stroke="#16266e"/><path d="M4 11h6v4H4zM4 18h6v4H4z" fill="#e8eefc"/><path d="M15 22h2m2 0h2m2 0h1" stroke="#222" stroke-width="2"/>',
    yellowrect: '<path d="M2 2h20v17H2z" fill="#fcd812" stroke="#d0481c" stroke-width="1.500"/><path d="M17 12v10M12 17h10" stroke="#2a7a3a"/><circle cx="17" cy="17" r="3" fill="none" stroke="#2a7a3a"/>',
    calc: '<path d="M4 1h16v22H4z" fill="#f8d83a" stroke="#c84a2a" stroke-width="2"/><path d="M7 4h10v4H7z" fill="#fff0b0" stroke="#7a3a10"/><path d="M7 12h2m2 0h2m2 0h2M7 16h2m2 0h2m2 0h2M7 20h2m2 0h2m2 0h2" stroke="#7a3a10" stroke-width="2"/>',
    moon: '<path d="M6 1q14 1 14 11T6 23q8-5 8-11T6 1z" fill="#fbe23a" stroke="#3a4a8a" stroke-width="1.500"/>',
    frac: label(5, 10, 12, '#2b3ac0', '32') + '<path d="M1 12h22" stroke="#e2552a" stroke-width="1.500"/>' + label(5, 23, 12, '#2b3ac0', '64'),

    stacklist: sheets() + '<path d="M9 7h13v16H9z" fill="#eef2ff" stroke="#5a6fb4"/><path d="M11 11h2m2 0h5M11 15h2m2 0h5M11 19h2m2 0h5" stroke="#4a5fa8"/>',
    stackpic: sheets() + '<path d="M9 12h14v11H9z" fill="#bfe6fa" stroke="#2a86c4" stroke-width="1.500"/><path d="M11 20l4-3 6 3" stroke="#fff" stroke-width="2" fill="none"/>',
    stackdots: sheets() + '<path d="M7 1v20M20 1v18M2 4v18" stroke="#2b3ac0" stroke-dasharray="2 3" stroke-width="1.500"/>',
    stackmove: '<path d="M1 5l6-4h15l-6 4q-8 3-15 0zM1 22l6-5h15l-6 5q-8 2-15 0z" fill="#e6f2ec" stroke="#41605f"/><path d="M12 5v8" stroke="#f28a2a" stroke-width="3"/><path d="M8 12h8l-4 7z" fill="#e8501c"/>',
    stackcopy: '<path d="M1 5l6-4h15l-6 4q-8 3-15 0zM1 22l6-5h15l-6 5q-8 2-15 0z" fill="#e6f2ec" stroke="#41605f"/>' + page(8, 6, 7, 10) + page(12, 9, 8, 11),
    mfg: '<path d="M2 1h20v6H2z" fill="#eef2ff" stroke="#2f4fc0"/>' + label(5, 7, 7, '#2b3ac0', 'MFG') + plane(3, 11) + plane(3, 18),
    planeup: plane(5, 16) + redArrow('M8 1l6 6h-3v9H5V7H2z'),
    planedown: plane(5, 16) + redArrow('M8 15l6-7h-3V1H5v7H2z'),
    planestar: plane(3, 12) + star(7, 6),
    planemark: plane(3, 12) + mark(9, 5),
    planesstar: plane(3, 11) + plane(3, 18) + star(8, 5),
    planesmark: plane(3, 11) + plane(3, 18) + mark(9, 5),
    planesstars: plane(3, 11) + plane(3, 18) + star(7, 5) + star(17, 5),
    planesmarks: plane(3, 11) + plane(3, 18) + mark(7, 5) + mark(17, 5),

    linkgrey: '<path d="M4 7v13h5V4zM11 10h4v10h-4z" fill="#9a9a9a"/><circle cx="15" cy="7" r="3" fill="none" stroke="#9a9a9a" stroke-width="2"/><circle cx="19" cy="15" r="3" fill="none" stroke="#8e8e8e" stroke-width="2"/>',
    swapfilter: '<path d="M3 2v7h11l-3-3 5-2" fill="none" stroke="#1f7a8a" stroke-width="3"/><path d="M11 12h12l-4 5v6l-4-2v-4z" fill="#f6b42a"/>',
    plusfilter: '<path d="M1 1h22v22H1z" fill="#f6e8e4" stroke="#b83a2a" stroke-width="2"/><path d="M9 5v9M5 9h8" stroke="#5c2a22" stroke-width="2"/><path d="M12 12h9l-4 4v5l-2-2v-3z" fill="#f6b42a"/>',
    undotarget: '<path d="M2 9q4-8 9-2l2 4" fill="none" stroke="#2b3a6c" stroke-width="3"/><circle cx="15" cy="16" r="4" fill="none" stroke="#c83222" stroke-width="1.500"/><path d="M15 9v14M8 16h14" stroke="#5c2a22" stroke-width="1.500"/>',
    binoc: '<path d="M2 5h8l2 4-5 3zM10 4l6 2-3 5z" fill="#6a7078" stroke="#333"/><path d="M14 10v12M14 14h4M14 20h4" stroke="#555"/><path d="M17 11h5v4h-5zM17 18h5v4h-5z" fill="#f2d63c" stroke="#555"/>',
    dashbox: '<path d="M3 4h19v16H3z" fill="none" stroke="#222" stroke-width="1.500" stroke-dasharray="3 2"/><path d="M1 2h4v4H1zM19 18h4v4h-4z" fill="#d8402a"/>',
    wirebox: '<path d="M1 13l6-8 10-1 6 7-5 8-11 1z" fill="#dfe0e8" stroke="#333"/><path d="M7 5l5 7-5 8M12 12l11-1" stroke="#333" fill="none"/><path d="M9 7l7-1" stroke="#d8402a" stroke-width="2"/>',
    shadedbox: '<path d="M1 7l8-5 14 4-9 5z" fill="#cfe2fc"/><path d="M1 7l13 4v12L1 18z" fill="#3c9cf4"/><path d="M14 11l9-5v12l-9 5z" fill="#1b6fe0"/>',

    vprogram: page(1, 2, 11, 14) + page(8, 7, 9, 12) + tree(15, 9),
    vmachine: '<path d="M2 13l5-2v9l-5 3z" fill="#8fb8ec" stroke="#2b4fae"/><path d="M2 20l5-6" stroke="#1b3f8e" stroke-width="2"/><path d="M9 1h5v11H9z" fill="#9a9a9a" stroke="#3c3c3c"/><circle cx="10" cy="12" r="3" fill="#f4b53c" stroke="#8b5a0c"/>' + tree(15, 9),
    vgeometry: '<path d="M2 6l6-4 9 2v9l-5 4-10-2z" fill="#7fa8f0" stroke="#2b4fae"/><path d="M2 6l10 2 5-4M12 8v9" stroke="#2b4fae" fill="none"/><circle cx="5" cy="12" r="3" fill="#f4a43c" stroke="#b03020"/>' + tree(15, 9),
    vmethod: '<path d="M1 2v5h21V2l-3 3-3-3-4 3-4-3-4 3z" fill="#e4f0fa" stroke="#2a62a0" stroke-width="1.500"/><path d="M1 16V9h13v7l-2-3-2 3-2-3-2 3-2-3z" fill="#e4f0fa" stroke="#2a62a0" stroke-width="1.500"/>' + tree(15, 9),
    draft: '<path d="M1 15Q1 3 11 2l9 3-4 12-6 5q-9 1-9-7z" fill="#f6c02a"/><path d="M1 15Q1 4 8 3l-2 18q-5-2-5-6z" fill="#e2401c"/><path d="M11 2l9 3-4 12-5-4z" fill="#4ac03a"/><path d="M9 7l6 5-4 6 9-3M15 12l5 9" stroke="#5c2a22" fill="none"/><path d="M8 6h3v3H8zM14 11h3v3h-3zM20 13h3v3h-3zM18 20h3v3h-3zM10 17h3v3h-3z" fill="#fff" stroke="#b03020"/>',
    point: '<path d="M12 3v18M3 12h18" stroke="#222" stroke-width="1.500"/>',
    extract: '<path d="M2 6l6-5h14l-6 5z" fill="#fbd070" stroke="#d8801c"/><path d="M10 17v-5H8l4-5 4 5h-2v5z" fill="#f2762a"/><path d="M2 17l6-3h14v5l-6 4H2z" fill="#8eb6f4" stroke="#2d5cc8"/><path d="M2 17h14l6-3M16 17v6" fill="none" stroke="#2d5cc8"/>',
    patch: '<path d="M1 22l5-6h17l-5 6z" fill="#fbc85a" stroke="#d8801c"/><path d="M7 4v14M17 4v14" stroke="#3a50b4" stroke-dasharray="2 1"/><path d="M9 6h6v13H9z" fill="#f6d8d0"/><ellipse cx="12" cy="4" rx="6" ry="3" fill="#fbb46a" stroke="#d8501c"/><ellipse cx="12" cy="18" rx="5" ry="2" fill="#fff" stroke="#d8501c"/>',
    sync: '<path d="M2 5l7-4h8v16l4 3-5 2H5l-3-4z" fill="#7fb0f2" stroke="#2d5cc8"/><path d="M10 5l10-3v13l-10 3z" fill="#fbc14b" stroke="#d8801c"/><path d="M5 6v12" stroke="#d4e6ff" stroke-width="2"/><path d="M23 19l-4 3 4 2" fill="none" stroke="#2b3a9c" stroke-width="1.500"/>',
    facet: '<path d="M1 6l4-4 4 5 13-5v13l-8 7-12-3z" fill="#f7a83a" stroke="#8a3a08"/><path d="M1 6l12 5 9-9M13 11l1 11M1 6l13 16M2 19l11-8M13 11l9 4M14 22l8-20M9 7l4 4" fill="none" stroke="#8a3a08"/>',

    ok: '<path d="M2 13l4-2 3 4L19 3l4 1L11 21H8z" fill="#1fa03c" stroke="#157a2c"/>',
    warn: '<path d="M8 1h8l-2 14h-4z" fill="#fbc81c" stroke="#c8901c"/><circle cx="12" cy="20" r="3" fill="#fbc81c" stroke="#c8901c"/>',
    folder: '<path d="M1 4h9l2 3h11v14H1z" fill="#f4da8e" stroke="#b8923c" stroke-width="1.500"/><path d="M9 9h12v12H9z" fill="#e0c880"/><path d="M11 11h8v3h-6v3h7v3h-9" fill="none" stroke="#3a3f9c" stroke-width="2"/>',
    contour: '<path d="M2 12q5-2 5-6h8q1 5 8 8l-6 3-3 6-5-4-5-1z" fill="#fff" stroke="#444" stroke-width="2"/><path d="M9 0h6v12H9z" fill="#5a80dc" stroke="#2b3a9c"/>',
    cavity: '<path d="M1 3h8v10q3 4 14 3v7H12Q1 20 1 3z" fill="#143c50"/><path d="M17 4h6v13h-8V4z" fill="#3cb8ee"/><path d="M11 0h7v14h-7z" fill="#5a80dc" stroke="#2b3a9c"/><path d="M7 8h3M18 8h4M16 20h7" stroke="#3cb8ee" stroke-width="3"/>',
    zlevel: '<path d="M1 4h6v8q4 5 9 5v6h-5Q1 20 1 4z" fill="#184650"/><path d="M10 0h8v13l-5 1-3-3z" fill="#7c9ce4" stroke="#2b3a9c"/><path d="M17 16h4M18 21h6" stroke="#2b3a9c" stroke-width="2"/>',
    planar: '<path d="M1 1h3v17h19v5H1z" fill="#eee" stroke="#555" stroke-width="1.500"/><path d="M12 0h6v11h-6z" fill="#5a80dc" stroke="#2b3a9c"/><path d="M7 7h4M19 7h4M7 12h16" stroke="#2b3ac0" stroke-width="2"/>',
    face: '<path d="M5 12l10-5 9 4v7l-10 5-9-5z" fill="#b9b9b9" stroke="#555" stroke-width="1.500"/><path d="M5 12l9 4 10-5M14 16v7M9 10l9 4" fill="none" stroke="#555" stroke-width="1.500"/><path d="M1 0h6v12H1z" fill="#7c9ce4" stroke="#2b3a9c"/><path d="M1 4h6M1 8h6" stroke="#2b3a9c"/>'
};

class CamIcon extends HTMLElement {
    constructor() {
        super();
        this.attachShadow({ mode: 'open' });
    }

    connectedCallback() {
        const name = this.getAttribute('name');
        this.shadowRoot.innerHTML = `
            <style>
                :host { display: block; width: 24px; height: 24px; flex: none; }
                svg { display: block; width: 100%; height: 100%; overflow: visible; }
            </style>
            <svg viewBox="0 0 24 24" aria-hidden="true">${ICONS[name] || ''}</svg>
        `;
    }
}
customElements.define('cam-icon', CamIcon);

class CamWindow extends HTMLElement {
    constructor() {
        super();
        this.attachShadow({ mode: 'open' });
        this.shadowRoot.innerHTML = `
            <style>
                :host {
                    display: flex;
                    flex-direction: column;
                    height: 100vh;
                    overflow: hidden;
                    background: #d0d0d0;
                }
                header { border-top: 9px solid #000; }
                main { display: flex; flex: 1; min-height: 0; border-top: 1px solid #8a8a8a; }
                .canvas { flex: 1; min-width: 0; }
                .side { flex: 0 0 266px; min-width: 0; }
                .canvas, .side { display: flex; }
                footer { border-top: 1px solid #f0f0f0; }
            </style>
            <header><slot name="bars"></slot></header>
            <main>
                <div class="canvas"><slot name="canvas"></slot></div>
                <div class="side"><slot name="side"></slot></div>
            </main>
            <footer><slot name="footer"></slot></footer>
        `;
    }
}
customElements.define('cam-window', CamWindow);

class ToolRow extends HTMLElement {
    constructor() {
        super();
        this.attachShadow({ mode: 'open' });
        this.shadowRoot.innerHTML = `
            <style>
                :host {
                    display: flex;
                    box-sizing: border-box;
                    height: 35px;
                    border-bottom: 1px solid var(--edge-dark);
                    overflow: hidden;
                    --row-align: center;
                }
                :host([kind="large"]) { height: 65px; --row-align: stretch; }
                :host([kind="clipped"]) {
                    height: 15px;
                    --row-align: flex-end;
                    --row-drop: 4px;
                    --caret-align: center;
                    --overflow-pad: 0 0 1px;
                }
            </style>
            <slot></slot>
        `;
    }
}
customElements.define('tool-row', ToolRow);

class ToolGroup extends HTMLElement {
    constructor() {
        super();
        this.attachShadow({ mode: 'open' });
    }

    connectedCallback() {
        const size = this.getAttribute('size');
        this.shadowRoot.innerHTML = `
            <style>
                :host {
                    display: flex;
                    flex: ${size ? `0 0 ${size}px` : '1 0 0'};
                    min-width: 0;
                    box-sizing: border-box;
                    border-right: 1px solid #bdbdbd;
                    border-top: 1px solid var(--edge-light);
                    background: linear-gradient(var(--bar-top), var(--bar-bottom));
                }
                .items {
                    display: flex;
                    flex: 1;
                    min-width: 0;
                    align-items: var(--row-align);
                    padding-bottom: var(--row-drop, 0);
                }
                :host([shifted]) .items { margin-left: -2px; }
                .grip {
                    width: 3px;
                    margin: 5px 0 5px 4px;
                    background: radial-gradient(circle at 1px 1px, #9a9a9a 1px, transparent 1px) 0 0 / 3px 4px;
                }
            </style>
            ${this.hasAttribute('grip') ? '<span class="grip"></span>' : ''}
            <div class="items"><slot></slot></div>
        `;
    }
}
customElements.define('tool-group', ToolGroup);

class ToolIcon extends HTMLElement {
    constructor() {
        super();
        this.attachShadow({ mode: 'open' });
    }

    connectedCallback() {
        const name = this.getAttribute('name');
        this.shadowRoot.innerHTML = `
            <style>
                :host { display: block; flex: 0 0 32px; }
                button {
                    display: flex;
                    justify-content: center;
                    width: 100%;
                    padding: 0;
                    border: 0;
                    background: none;
                }
            </style>
            <button type="button" aria-label="${name}"><cam-icon name="${name}"></cam-icon></button>
        `;
    }
}
customElements.define('tool-icon', ToolIcon);

class ToolButton extends HTMLElement {
    constructor() {
        super();
        this.attachShadow({ mode: 'open' });
    }

    connectedCallback() {
        this.shadowRoot.innerHTML = `
            <style>
                :host { display: flex; flex: 0 0 62px; }
                button {
                    display: flex;
                    flex-direction: column;
                    align-items: center;
                    gap: 4px;
                    width: 100%;
                    margin: 2px 0;
                    padding: 3px 0 0;
                    border: 1px solid transparent;
                    border-radius: 3px;
                    background: none;
                    color: inherit;
                    font: inherit;
                    line-height: 12px;
                }
                button[aria-pressed="true"] { background: #fff; border-color: #555; }
                span { display: block; width: 50px; text-align: center; }
            </style>
            <button type="button" aria-pressed="${this.hasAttribute('pressed')}">
                <cam-icon name="${this.getAttribute('icon')}"></cam-icon>
                <span><slot></slot></span>
            </button>
        `;
    }
}
customElements.define('tool-button', ToolButton);

class ToolSep extends HTMLElement {
    constructor() {
        super();
        this.attachShadow({ mode: 'open' });
        this.shadowRoot.innerHTML = `
            <style>
                :host { display: flex; flex: 0 0 5px; align-self: stretch; justify-content: center; }
                i { width: 1px; background: #b2b2b2; border-right: 1px solid #f2f2f2; }
            </style>
            <i></i>
        `;
    }
}
customElements.define('tool-sep', ToolSep);

class ToolCaret extends HTMLElement {
    constructor() {
        super();
        this.attachShadow({ mode: 'open' });
        this.shadowRoot.innerHTML = `
            <style>
                :host { display: flex; flex: 0 0 13px; align-self: center; justify-content: center; }
                button { padding: 0; border: 0; background: none; line-height: 0; }
            </style>
            <button type="button" aria-label="menu"><svg width="5" height="3"><path d="M0 0h5L3 3H2z" fill="#111"/></svg></button>
        `;
    }
}
customElements.define('tool-caret', ToolCaret);

class ToolOverflow extends HTMLElement {
    constructor() {
        super();
        this.attachShadow({ mode: 'open' });
    }

    connectedCallback() {
        const more = this.hasAttribute('more')
            ? '<svg width="8" height="6"><path d="M1 0l2 3-2 3M5 0l2 3-2 3" fill="none" stroke="#111" stroke-width="1.5"/></svg>'
            : '<i></i>';
        this.shadowRoot.innerHTML = `
            <style>
                :host {
                    display: flex;
                    flex: 0 0 12px;
                    align-self: stretch;
                    margin-left: auto;
                    margin-right: 2px;
                }
                button {
                    display: flex;
                    flex-direction: column;
                    justify-content: space-between;
                    align-items: center;
                    width: 100%;
                    padding: var(--overflow-pad, 5px 0 9px);
                    border: 0;
                    background: none;
                }
            </style>
            <button type="button" aria-label="more">
                ${more}
                <svg width="5" height="3"><path d="M0 0h5L3 3H2z" fill="#111"/></svg>
            </button>
        `;
    }
}
customElements.define('tool-overflow', ToolOverflow);

class StartMenu extends HTMLElement {
    constructor() {
        super();
        this.attachShadow({ mode: 'open' });
        this.shadowRoot.innerHTML = `
            <style>
                :host { display: block; flex: 0 0 69px; }
                button {
                    display: flex;
                    align-items: center;
                    gap: 4px;
                    padding: 0 0 0 3px;
                    border: 0;
                    background: none;
                    color: inherit;
                    font: inherit;
                    line-height: 24px;
                }
            </style>
            <button type="button">
                <cam-icon name="globe"></cam-icon>
                <slot></slot>
                <svg width="5" height="3"><path d="M0 0h5L3 3H2z" fill="#111"/></svg>
            </button>
        `;
    }
}
customElements.define('start-menu', StartMenu);

class SelectionBar extends HTMLElement {
    constructor() {
        super();
        this.attachShadow({ mode: 'open' });
        this.shadowRoot.innerHTML = `
            <style>
                :host {
                    display: flex;
                    align-items: center;
                    height: 28px;
                    border-top: 1px solid #a2a2a2;
                    box-sizing: border-box;
                    background: linear-gradient(#dedede, #d2d2d2);
                }
                label {
                    display: flex;
                    box-sizing: border-box;
                    height: 17px;
                    border: 1px solid #777;
                    border-radius: 2px;
                    background: #fff;
                }
                label.type { width: 115px; margin-left: -2px; margin-right: 8px; }
                label.scope { width: 125px; margin-right: 3px; }
                select {
                    appearance: none;
                    flex: 1;
                    min-width: 0;
                    padding: 0;
                    border: 0;
                    background: none;
                    color: inherit;
                    font: inherit;
                    line-height: 15px;
                }
                .drop {
                    display: grid;
                    place-items: center;
                    width: 18px;
                    border-radius: 2px;
                    background: linear-gradient(#cfe6fb, #5b9be0);
                }
                button {
                    display: grid;
                    place-items: center;
                    width: 24px;
                    height: 23px;
                    padding: 0;
                    border: 1px solid transparent;
                    border-radius: 2px;
                    background: none;
                }
                button[aria-pressed="true"] { background: #fff; border-color: #666; }
                cam-icon { width: 18px; height: 18px; }
            </style>
            <label class="type">
                <select aria-label="类型"><option>面</option></select>
                <span class="drop"><svg width="12" height="8"><path d="M0 0h12L6 8z" fill="#111"/></svg></span>
            </label>
            <label class="scope">
                <select aria-label="范围"><option>整个装配</option></select>
                <span class="drop"><svg width="12" height="8"><path d="M0 0h12L6 8z" fill="#111"/></svg></span>
            </label>
            <button type="button" aria-label="link"><cam-icon name="linkgrey"></cam-icon></button>
            <tool-sep></tool-sep>
            <button type="button" aria-label="reset filter"><cam-icon name="swapfilter"></cam-icon></button>
            <button type="button" aria-label="filter"><cam-icon name="plusfilter"></cam-icon></button>
            <tool-caret></tool-caret>
            <button type="button" aria-label="target"><cam-icon name="undotarget"></cam-icon></button>
            <button type="button" aria-label="find"><cam-icon name="binoc"></cam-icon></button>
            <tool-sep></tool-sep>
            <button type="button" aria-label="rectangle"><cam-icon name="dashbox"></cam-icon></button>
            <tool-caret></tool-caret>
            <tool-sep></tool-sep>
            <button type="button" aria-label="wireframe"><cam-icon name="wirebox"></cam-icon></button>
            <button type="button" aria-label="shaded" aria-pressed="true"><cam-icon name="shadedbox"></cam-icon></button>
        `;
    }
}
customElements.define('selection-bar', SelectionBar);

const FACE_OUTLINE = 'M371 707L410 450Q421 395 472 391C540 388 600 411 633 425Q692 449 741 488Q768 508 762 546L732 700C733 735 728 748 703 762Q640 785 550 794C450 793 415 776 397 760Q371 738 371 707z';

class PartViewport extends HTMLElement {
    constructor() {
        super();
        this.attachShadow({ mode: 'open' });
        this.shadowRoot.innerHTML = `
            <style>
                :host { display: block; flex: 1; min-width: 0; background: #222429; }
                svg { display: block; width: 100%; height: 100%; }
                text { font-family: "Liberation Sans", sans-serif; }
            </style>
            <svg viewBox="0 223 840 585" preserveAspectRatio="xMidYMid slice" role="img" aria-label="part">
                <defs>
                    <linearGradient id="face" gradientUnits="userSpaceOnUse" x1="560" y1="391" x2="545" y2="795">
                        <stop offset="0" stop-color="#ff9200"/>
                        <stop offset=".3" stop-color="#ff9000"/>
                        <stop offset=".55" stop-color="#ff7c00"/>
                        <stop offset=".68" stop-color="#e66400"/>
                        <stop offset=".78" stop-color="#b84a00"/>
                        <stop offset=".87" stop-color="#7c3200"/>
                        <stop offset="1" stop-color="#6a2a00"/>
                    </linearGradient>
                    <radialGradient id="shine" gradientUnits="userSpaceOnUse" cx="0" cy="0" r="1" gradientTransform="translate(655 540) rotate(14) scale(135 52)">
                        <stop offset="0" stop-color="#ffe67c"/>
                        <stop offset=".4" stop-color="#ffc846" stop-opacity=".8"/>
                        <stop offset="1" stop-color="#ff9800" stop-opacity="0"/>
                    </radialGradient>
                    <radialGradient id="shine2" gradientUnits="userSpaceOnUse" cx="0" cy="0" r="1" gradientTransform="translate(395 510) rotate(8) scale(100 34)">
                        <stop offset="0" stop-color="#ffb030" stop-opacity=".7"/>
                        <stop offset="1" stop-color="#ff9800" stop-opacity="0"/>
                    </radialGradient>
                    <linearGradient id="blockR" x1="0" x2="1">
                        <stop offset="0" stop-color="#9474c6"/>
                        <stop offset=".4" stop-color="#a780da"/>
                        <stop offset="1" stop-color="#7659a0"/>
                    </linearGradient>
                    <linearGradient id="hole" x1="0" x2="1">
                        <stop offset="0" stop-color="#9a7ccc"/>
                        <stop offset=".4" stop-color="#584280"/>
                        <stop offset="1" stop-color="#453266"/>
                    </linearGradient>
                    <linearGradient id="spot" x1=".1" y1="0" x2=".7" y2="1">
                        <stop offset="0" stop-color="#ffd0a8"/>
                        <stop offset=".35" stop-color="#ffd8a0"/>
                        <stop offset=".6" stop-color="#ffe08c"/>
                        <stop offset=".7" stop-color="#c88c1c"/>
                        <stop offset="1" stop-color="#b47a14"/>
                    </linearGradient>
                    <clipPath id="faceClip"><path d="${FACE_OUTLINE}"/></clipPath>
                </defs>

                <!-- base plate -->
                <path d="M797 406Q822 412 820 436L757 808H735z" fill="#7357a0" stroke="#3d2c5c"/>
                <path d="M423 362Q426 346 443 348L797 407Q812 411 810 430L747 808H384L367 804Q351 799 353 783z" fill="#a67fdb"/>
                <path d="M797 407Q812 411 810 430L747 808" fill="none" stroke="#4c3874"/>
                <path d="M810 430h10" stroke="#4c3874"/>

                <!-- boss wall and top face -->
                <path d="M741 488Q775 512 770 546L738 730Q732 758 700 765L690 760 740 560z" fill="#7659a6" stroke="#4c3874"/>
                <path d="M761 546h9M732 721h8" stroke="#3d2c5c"/>
                <path d="${FACE_OUTLINE}" fill="url(#face)"/>
                <g clip-path="url(#faceClip)">
                    <rect x="300" y="440" width="240" height="140" fill="url(#shine2)"/>
                    <rect x="490" y="440" width="320" height="220" fill="url(#shine)"/>
                </g>
                <path d="${FACE_OUTLINE}" fill="none" stroke="#ff7410" stroke-width="2"/>

                <!-- holes -->
                <circle cx="585" cy="467" r="22" fill="url(#hole)" stroke="#ff7a1c" stroke-width="3"/>
                <circle cx="585" cy="467" r="21" fill="none" stroke="#b99ae6"/>
                <ellipse cx="592" cy="469" rx="14" ry="17" fill="#a67fdb" stroke="#5d4688"/>
                <circle cx="540" cy="738" r="24" fill="url(#hole)" stroke="#ff7a1c" stroke-width="3"/>
                <circle cx="540" cy="738" r="22" fill="none" stroke="#b99ae6"/>
                <ellipse cx="547" cy="738" rx="14" ry="18" fill="#a67fdb" stroke="#5d4688"/>

                <!-- arc slots -->
                <g fill="none" stroke-linecap="round">
                    <g stroke="#ff7010" stroke-width="18"><path d="M528 531A78 78 0 0 0 507 658"/><path d="M544 555A51 51 0 0 0 529 642"/></g>
                    <g stroke="#4d3872" stroke-width="15"><path d="M528 531A78 78 0 0 0 507 658"/><path d="M544 555A51 51 0 0 0 529 642"/></g>
                    <g stroke="#a07ad2" stroke-width="12"><path d="M529 533A78 78 0 0 0 507 658"/><path d="M545 557A51 51 0 0 0 530 642"/></g>
                    <g stroke="#5d4688"><path d="M516 536A80 80 0 0 0 501 657"/><path d="M535 560A54 54 0 0 0 524 641"/></g>
                </g>

                <circle cx="558" cy="602" r="19" fill="#a07ad2" stroke="#ff7010" stroke-width="2"/>
                <circle cx="558" cy="602" r="18" fill="none" stroke="#3d2c5c"/>
                <circle cx="558" cy="603" r="15" fill="none" stroke="#6a5096"/>

                <!-- pocket under the block -->
                <path d="M612 646Q618 674 637 675Q652 673 664 654z" fill="#a67fdb" stroke="#ff7010" stroke-width="3"/>
                <path d="M617 648Q624 670 637 671Q650 669 659 655" fill="none" stroke="#4c3874"/>

                <!-- cursor spot and tool arc -->
                <circle cx="635" cy="560" r="30" fill="url(#spot)" opacity=".85"/>
                <path d="M652 570L664 562L674 584L660 582z" fill="#8f72bd"/>
                <path d="M628 574Q640 553 653 556Q662 558 667 566" fill="none" stroke="#e01c10" stroke-width="7"/>
                <path d="M665 563Q673 571 675 584" fill="none" stroke="#f02ad0" stroke-width="7"/>

                <!-- block -->
                <path d="M577 570L712 592L700 662L566 639Q567 628 571 617L575 612V596z" fill="#8467b0" stroke="#ff8a30" stroke-width="2"/>
                <path d="M577 570L636 580L623 650L566 639L571 617L575 612V596z" fill="#8366ac"/>
                <path d="M636 580L706 592L697 661L623 650z" fill="url(#blockR)"/>
                <path d="M566 634L698 657L700 662L566 640z" fill="#5a4482"/>
                <path d="M577 570L712 591L708 597L576 573z" fill="#b592ea"/>
                <path d="M576 573L710 596M706 588L696 661M636 580L624 648M568 635L698 658" fill="none" stroke="#35264f"/>

                <!-- coordinate axes -->
                <g fill="#d8501c" stroke="#d8501c">
                    <path d="M560 578L571 512" stroke-width="2"/>
                    <path d="M573 497L567 516L574 516zM562 548L559 578L566 558z"/>
                    <path d="M558 580L558 600" stroke-width="1"/>
                </g>
                <text x="551" y="493" font-size="12" fill="#d8501c">XM</text>
                <text x="545" y="542" font-size="12" fill="#d8501c">XC</text>
                <g stroke="#228a22" fill="#228a22">
                    <path d="M462 586L545 600"/>
                    <path d="M461 587l10-3-2 5zM500 592l18 1-1 5zM475 587l14 3" stroke-width="2"/>
                </g>
                <text x="450" y="578" font-size="12" fill="#5a8a1c">YM</text>
                <text x="505" y="587" font-size="11" fill="#3a9a4a">C</text>
                <ellipse cx="550" cy="600" rx="6" ry="4" fill="#1a3cc8"/>
                <text x="547" y="600" font-size="11" fill="#2450e0">ZMC</text>

                <!-- full-size crosshair -->
                <path d="M0 561H840M636 223V808" stroke="#cfcdb4"/>
                <path d="M636 380V808M388 561H762" stroke="#8a8450"/>
                <circle cx="636" cy="561" r="12" fill="none" stroke="#fff6d8" stroke-width="2" stroke-dasharray="13 6"/>
                <circle cx="636" cy="561" r="13" fill="none" stroke="#3a2c14" stroke-dasharray="14 6"/>
                <path d="M636 545v32M620 561h32" stroke="#201a10" stroke-width="3"/>
                <path d="M636 546v30M621 561h30" stroke="#cdbf90"/>

                <!-- view triad -->
                <path d="M21 731L44 734L40 754L19 750z" fill="#bdb9bd" stroke="#8a7a84"/>
                <path d="M41 753L45 728" stroke="#d8442c" stroke-width="3"/>
                <path d="M46 720L42 732L49 731z" fill="#d8442c"/>
                <path d="M8 750H38" stroke="#2a9a3c"/>
                <path d="M20 750l-12-3 4 5z" fill="#2a9a3c"/>
                <circle cx="41" cy="754" r="5" fill="#e8eef8"/>
                <ellipse cx="37" cy="755" rx="4" ry="3" fill="#1c4ce0"/>
                <text x="43" y="721" font-size="12" fill="#e0482c">X</text>
                <text x="0" y="754" font-size="11" fill="#2a9a3c">Y</text>
            </svg>
        `;
    }
}
customElements.define('part-viewport', PartViewport);

const OPERATIONS = [
    { icon: 'face', text: 'FACE_MILLING_COPY_1', fresh: true },
    { icon: 'contour', text: 'CONTOUR_AREA_COPY_COPY_C..', fresh: true, last: true },
    { group: true, text: '2-D10-1' },
    { icon: 'cavity', text: 'CAVITY_MILL_COPY', fresh: true },
    { icon: 'contour', text: 'CONTOUR_AREA_COPY_COPY', last: true },
    { group: true, text: '3-D10-1' },
    { icon: 'planar', text: 'PLANAR_PROFILE_COPY_1', last: true },
    { group: true, text: '4-D3-19MM' },
    { icon: 'cavity', text: 'CAVITY_MILL_COPY_COPY', fresh: true, last: true },
    { group: true, text: '5-D3-23MM' },
    { icon: 'cavity', text: 'CAVITY_MILL_COPY_COPY_COPY', last: true },
    { group: true, text: '6-D1.5-7MM' },
    { icon: 'zlevel', text: 'ZLEVEL_PROFILE_1_COPY', fresh: true, last: true },
    { group: true, text: '7-D6R3-J', warn: true },
    { icon: 'zlevel', text: 'ZLEVEL_PROFILE_1_COPY_1', selected: true },
    { icon: 'contour', text: 'CONTOUR_AREA_COPY_COPY_COP', warn: true, last: true },
    { group: true, text: '8-D3-J' },
    { icon: 'zlevel', text: 'ZLEVEL_PROFILE_1_COPY_CO..', fresh: true, last: true },
    { group: true, text: '9-D1.5-J' },
    { icon: 'zlevel', text: 'ZLEVEL_PROFILE_1_COPY_COPY', fresh: true },
    { icon: 'zlevel', text: 'ZLEVEL_PROFILE_1_COPY_CO..' },
    { icon: 'zlevel', text: 'ZLEVEL_PROFILE_1_COPY_CO..', last: true },
    { group: true, text: '10-D3R1.5-J' },
    { icon: 'contour', text: 'CONTOUR_AREA_COPY_COPY_C..', fresh: true, last: true }
];

class OperationRow extends HTMLElement {
    constructor() {
        super();
        this.attachShadow({ mode: 'open' });
    }

    connectedCallback() {
        const group = this.hasAttribute('group');
        const state = this.hasAttribute('warn') ? 'warn' : 'ok';
        const lead = group
            ? '<button type="button" aria-label="collapse"></button><i class="dash short"></i>'
            : '<i class="branch"></i><i class="dash"></i>';
        this.shadowRoot.innerHTML = `
            <style>
                :host {
                    display: flex;
                    flex: 1 1 0;
                    min-height: 0;
                    align-items: center;
                    overflow: hidden;
                    font-family: "Liberation Mono", monospace;
                    font-size: 10px;
                    color: #333;
                }
                :host([fresh]) { color: #5a3ea8; }
                .trunk { align-self: stretch; width: 29px; flex: none; border-right: 1px dotted #999; }
                .branch { align-self: stretch; width: 19px; flex: none; border-right: 1px dotted #999; }
                :host([last]) .branch { height: 50%; }
                .dash { width: 8px; flex: none; border-top: 1px dotted #999; }
                .dash.short { width: 6px; }
                button {
                    flex: none;
                    width: 10px;
                    height: 10px;
                    margin-left: -6px;
                    padding: 0;
                    border: 1px solid #888;
                    border-radius: 2px;
                    background: linear-gradient(#555, #555) center / 6px 1px no-repeat #fff;
                }
                .state { width: 14px; height: 14px; margin: 0 1px 0 2px; }
                .kind { width: 16px; height: 16px; }
                .text {
                    align-self: stretch;
                    display: flex;
                    flex: 1;
                    align-items: center;
                    padding-left: 3px;
                    white-space: nowrap;
                }
                :host([selected]) .text { background: #1c8cf4; color: #fff; }
            </style>
            <i class="trunk"></i>${lead}
            <cam-icon class="state" name="${state}"></cam-icon>
            <cam-icon class="kind" name="${group ? 'folder' : this.getAttribute('icon')}"></cam-icon>
            <span class="text"><slot></slot></span>
        `;
    }
}
customElements.define('operation-row', OperationRow);

class OperationNavigator extends HTMLElement {
    constructor() {
        super();
        this.attachShadow({ mode: 'open' });
    }

    connectedCallback() {
        const rows = OPERATIONS.map((op) => {
            const flags = ['group', 'fresh', 'last', 'warn', 'selected'].filter((f) => op[f]).join(' ');
            return `<operation-row role="treeitem" icon="${op.icon || ''}" ${flags}>${op.text}</operation-row>`;
        }).join('');
        this.shadowRoot.innerHTML = `
            <style>
                :host {
                    display: flex;
                    flex: 1;
                    flex-direction: column;
                    min-width: 0;
                    box-sizing: border-box;
                    padding: 0 0 2px 10px;
                    border-left: 1px solid #f6f6f6;
                    background: #ebebeb;
                }
                h2 {
                    display: flex;
                    align-items: center;
                    gap: 12px;
                    height: 33px;
                    margin: 0 0 0 4px;
                    font: 700 13px "Liberation Mono", "Noto Sans CJK SC", monospace;
                }
                h2 i { width: 11px; height: 9px; border: 1px solid #222; border-top-width: 2px; }
                .list {
                    display: flex;
                    flex: 1;
                    flex-direction: column;
                    min-height: 0;
                    border: 1px solid #777;
                    border-right: 0;
                    background: #fff;
                    overflow: hidden;
                }
                .head {
                    height: 17px;
                    padding-left: 6px;
                    line-height: 17px;
                    background: linear-gradient(#f6f6f6, #cfcfcf);
                }
                .rows { display: flex; flex: 1; flex-direction: column; min-height: 0; }
                operation-row { border-bottom: 1px solid #ececec; box-sizing: border-box; }
                operation-row:nth-child(odd) { background: #f5f5f5; }
                .scroll { display: flex; align-items: center; height: 18px; background: #efefef; }
                .scroll svg { width: 19px; }
                .thumb {
                    display: grid;
                    place-items: center;
                    box-sizing: border-box;
                    width: 117px;
                    height: 16px;
                    border: 1px solid #999;
                    border-radius: 2px;
                    background: linear-gradient(#f4f4f4, #cfcfcf);
                }
                .thumb i { width: 7px; height: 6px; background: repeating-linear-gradient(90deg, #444 0 1px, transparent 1px 3px); }
                .splitter { display: flex; align-items: center; height: 16px; }
                .splitter::before { content: ""; width: 140px; border-top: 1px solid #bbb; }
                .splitter::after { content: ""; flex: 1; border-top: 1px solid #bbb; }
                .splitter i { width: 63px; height: 5px; margin: 0 5px; background: #cfcfcf; border-bottom: 1px solid #999; }
            </style>
            <h2><i></i>${this.getAttribute('heading')}</h2>
            <div class="list">
                <div class="head">${this.getAttribute('column')}</div>
                <div class="rows" role="tree">${rows}</div>
                <div class="scroll">
                    <svg height="8" viewBox="0 0 19 8"><path d="M11 0v8L7 4z" fill="#333"/></svg>
                    <span class="thumb"><i></i></span>
                </div>
            </div>
            <div class="splitter"><i></i></div>
        `;
    }
}
customElements.define('operation-navigator', OperationNavigator);

class StatusLine extends HTMLElement {
    constructor() {
        super();
        this.attachShadow({ mode: 'open' });
        this.shadowRoot.innerHTML = `
            <style>
                :host {
                    display: block;
                    box-sizing: border-box;
                    height: 12px;
                    padding-left: 52%;
                    overflow: hidden;
                    border-top: 1px solid #f4f4f4;
                    background: #dadada;
                    font: 700 13px/19px "Liberation Mono", "Noto Sans CJK SC", monospace;
                }
            </style>
            <slot></slot>
        `;
    }
}
customElements.define('status-line', StatusLine);
</script>
</body>
</html>
